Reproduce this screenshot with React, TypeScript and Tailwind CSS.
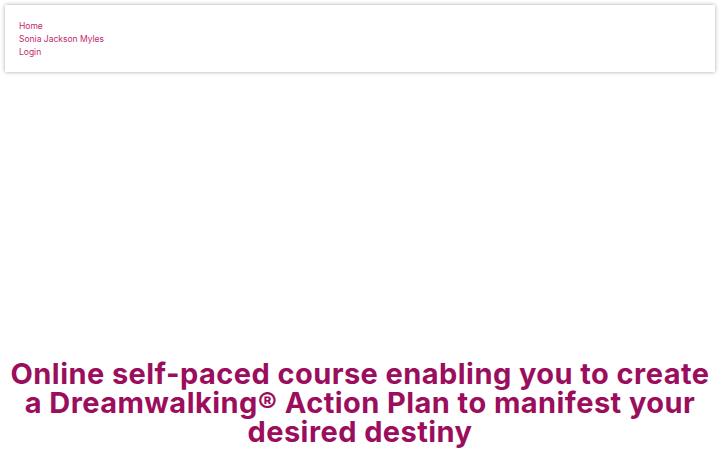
import React from "react";

const navLinks = ["Home", "Sonia Jackson Myles", "Login"];

export default function App() {
  return (
    <div className="min-h-screen bg-white font-['Inter',sans-serif]">
      {/* top nav */}
      <div className="p-[5px]">
        <nav className="bg-white px-[14px] pt-[15px] pb-[13px] shadow-[0_0_4px_rgba(0,0,0,0.35)]">
          <ul className="flex flex-col text-[8.5px] leading-[13px] text-[#c2286e]">
            {navLinks.map((link) => (
              <li key={link}>
                <a href="#">{link}</a>
              </li>
            ))}
          </ul>
        </nav>
      </div>

      {/* hero area (image not loaded) */}
      <div className="h-[282px]" />

      <h1 className="px-[6px] text-center text-[29px] font-bold leading-[29px] tracking-[0.015em] text-[#9a0e5d]">
        Online self-paced course enabling you to create a Dreamwalking® Action Plan to manifest your desired destiny
      </h1>
    </div>
  );
}
